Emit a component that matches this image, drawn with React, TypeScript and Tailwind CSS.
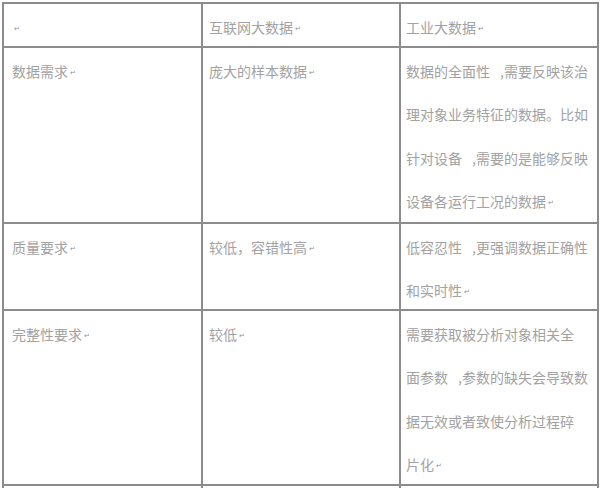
import React from "react"

type Cell = React.ReactNode[]

// Word-style paragraph mark at the end of each cell
function Mark() {
  return (
    <span className="ml-[2px] inline-block align-middle text-[7px] leading-none text-[#8f8f8f] [font-family:'DejaVu_Sans',sans-serif]">
      ↵
    </span>
  )
}

// comma rendered the way the source doc shows it: a full-width slot with the comma at the right
function Comma() {
  return <span className="inline-block w-[14px] text-right">,</span>
}

const rows: { h: string; cells: Cell[] }[] = [
  {
    h: "h-[44px]",
    cells: [[""], ["互联网大数据"], ["工业大数据"]],
  },
  {
    h: "h-[176px]",
    cells: [
      ["数据需求"],
      ["庞大的样本数据"],
      [
        <>数据的全面性<Comma />需要反映该治</>,
        "理对象业务特征的数据。比如",
        <>针对设备<Comma />需要的是能够反映</>,
        "设备各运行工况的数据",
      ],
    ],
  },
  {
    h: "h-[87px]",
    cells: [
      ["质量要求"],
      ["较低，容错性高"],
      [<>低容忍性<Comma />更强调数据正确性</>, "和实时性"],
    ],
  },
  {
    h: "h-[175px]",
    cells: [
      ["完整性要求"],
      ["较低"],
      [
        "需要获取被分析对象相关全",
        <>面参数<Comma />参数的缺失会导致数</>,
        "据无效或者致使分析过程碎",
        "片化",
      ],
    ],
  },
  {
    h: "h-[44px]",
    cells: [[""], [""], [""]],
  },
]

const widths = ["w-[199px] pl-[8px]", "w-[198px] pl-[6px]", "w-[198px] pl-[5px]"]

export default function App() {
  return (
    <div className="h-[488px] w-[600px] overflow-hidden bg-white pl-[2px] pt-[2px]">
      <div className="inline-flex flex-col border-l-2 border-t-2 border-[#8c8c8c] text-[14px] leading-[43.4px] text-[#a2a2a2] [font-family:'Noto_Sans_CJK_SC',sans-serif]">
        {rows.map((row, ri) => (
          <div key={ri} className={`flex ${row.h}`}>
            {row.cells.map((lines, ci) => (
              <div
                key={ci}
                className={`shrink-0 border-b-2 border-r-2 border-[#8c8c8c] pt-[2px] ${widths[ci]}`}
              >
                {ri < 4 &&
                  lines.map((line, li) => (
                    <div key={li} className="whitespace-nowrap">
                      {line}
                      {li === lines.length - 1 && <Mark />}
                    </div>
                  ))}
              </div>
            ))}
          </div>
        ))}
      </div>
    </div>
  )
}
